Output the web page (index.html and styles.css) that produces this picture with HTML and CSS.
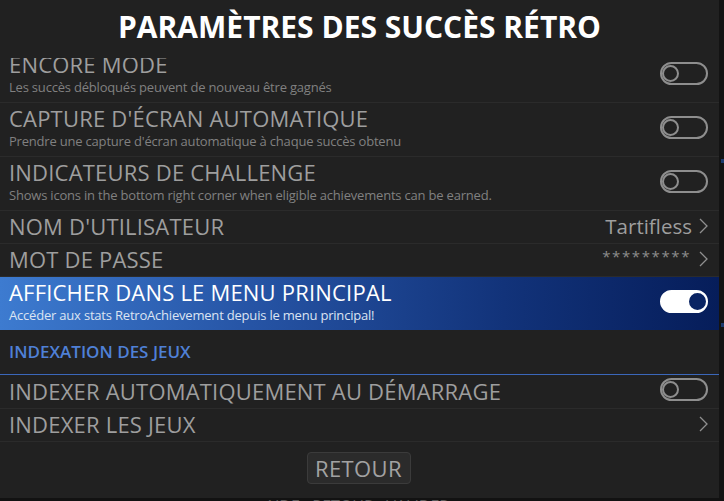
FILE: index.html
```html
<!DOCTYPE html>
<html lang="fr">
<head>
<meta charset="utf-8">
<title>Paramètres des succès rétro</title>
<link rel="stylesheet" href="styles.css">
</head>
<body>
<div class="screen">
  <div class="panel">
    <h1 class="title">PARAMÈTRES DES SUCCÈS RÉTRO</h1>
    <div class="list">
      <div class="list-inner">
        <div class="row row-desc">
          <div class="row-text">
            <div class="row-title">ENCORE MODE</div>
            <div class="row-sub">Les succès débloqués peuvent de nouveau être gagnés</div>
          </div>
          <span class="toggle"><span class="knob"></span></span>
        </div>
        <div class="row row-desc">
          <div class="row-text">
            <div class="row-title">CAPTURE D'ÉCRAN AUTOMATIQUE</div>
            <div class="row-sub">Prendre une capture d'écran automatique à chaque succès obtenu</div>
          </div>
          <span class="toggle"><span class="knob"></span></span>
        </div>
        <div class="row row-desc">
          <div class="row-text">
            <div class="row-title">INDICATEURS DE CHALLENGE</div>
            <div class="row-sub">Shows icons in the bottom right corner when eligible achievements can be earned.</div>
          </div>
          <span class="toggle"><span class="knob"></span></span>
        </div>
        <div class="row row-single">
          <div class="row-text"><div class="row-title">NOM D'UTILISATEUR</div></div>
          <div class="value">
            <span class="value-text">Tartifless</span>
            <svg class="chev" width="9" height="16" viewBox="0 0 9 16"><polyline points="1,1 8,8 1,15" fill="none" stroke="#8f8f8f" stroke-width="1.3"/></svg>
          </div>
        </div>
        <div class="row row-single">
          <div class="row-text"><div class="row-title">MOT DE PASSE</div></div>
          <div class="value">
            <span class="pw">*********</span>
            <svg class="chev" width="9" height="16" viewBox="0 0 9 16"><polyline points="1,1 8,8 1,15" fill="none" stroke="#8f8f8f" stroke-width="1.3"/></svg>
          </div>
        </div>
        <div class="row row-desc active">
          <div class="row-text">
            <div class="row-title">AFFICHER DANS LE MENU PRINCIPAL</div>
            <div class="row-sub">Accéder aux stats RetroAchievement depuis le menu principal!</div>
          </div>
          <span class="toggle on"><span class="knob"></span></span>
        </div>
        <div class="group">INDEXATION DES JEUX</div>
        <div class="row row-single row-first">
          <div class="row-text"><div class="row-title">INDEXER AUTOMATIQUEMENT AU DÉMARRAGE</div></div>
          <span class="toggle"><span class="knob"></span></span>
        </div>
        <div class="row row-single">
          <div class="row-text"><div class="row-title">INDEXER LES JEUX</div></div>
          <div class="value">
            <svg class="chev" width="9" height="16" viewBox="0 0 9 16"><polyline points="1,1 8,8 1,15" fill="none" stroke="#8f8f8f" stroke-width="1.3"/></svg>
          </div>
        </div>
      </div>
    </div>
    <div class="footer">
      <button class="btn">RETOUR</button>
    </div>
  </div>
  <div class="rail">
    <span class="rail-mark mark-a"></span>
    <span class="rail-mark mark-b"></span>
  </div>
</div>
<div class="hint">AIDE &nbsp; RETOUR &nbsp; VALIDER</div>
</body>
</html>
```
FILE: styles.css
```css
html, body {
  margin: 0;
  padding: 0;
  background: #121212;
}
body {
  width: 724px;
  height: 501px;
  overflow: hidden;
  font-family: "Open Sans", "Noto Sans", sans-serif;
}
.screen {
  display: flex;
  height: 498px;
}
.panel {
  width: 719px;
  background: #212121;
  display: flex;
  flex-direction: column;
}
.title {
  margin: 0;
  padding: 9px 0 13px;
  font-size: 30px;
  line-height: 36px;
  font-weight: 700;
  color: #ffffff;
  text-align: center;
}
.list {
  height: 385px;
  overflow: hidden;
}
.list-inner {
  margin-top: -9px;
}
.row {
  display: flex;
  align-items: flex-start;
  justify-content: space-between;
  box-sizing: border-box;
  padding: 0 11px 0 9px;
  border-bottom: 1px solid #2b2b2b;
}
.row-desc { height: 54px; }
.row-single { height: 33px; }
.row-first { height: 34px; }
.row-text {
  padding-top: 3px;
}
.row-first .row-text { padding-top: 4px; }
.row-title {
  font-size: 22px;
  line-height: 24px;
  letter-spacing: 0.2px;
  color: #9e9e9e;
  white-space: nowrap;
}
.row-sub {
  margin-top: 2px;
  font-size: 13px;
  line-height: 18px;
  letter-spacing: -0.2px;
  color: #808080;
  white-space: nowrap;
}
.toggle {
  align-self: center;
  margin-bottom: 4px;
  box-sizing: border-box;
  width: 48px;
  height: 23px;
  border: 2px solid #8e8e8e;
  border-radius: 12px;
  display: flex;
  align-items: center;
}
.knob {
  box-sizing: border-box;
  width: 17px;
  height: 17px;
  border: 2px solid #8e8e8e;
  border-radius: 50%;
}
.toggle.on {
  background: #ffffff;
  border-color: #ffffff;
  justify-content: flex-end;
}
.toggle.on .knob {
  background: #0a2463;
  border-color: #0a2463;
}
.value {
  display: flex;
  align-items: center;
  height: 24px;
  padding-top: 3px;
}
.value-text {
  font-size: 20.5px;
  line-height: 24px;
  color: #9e9e9e;
  margin-right: 7px;
}
.pw {
  align-self: flex-start;
  font-size: 15px;
  line-height: 15px;
  letter-spacing: 1.6px;
  color: #8c8c8c;
  margin-top: 2px;
  margin-right: 8px;
}
.chev {
  display: block;
}
.active {
  height: 53px;
  border-bottom: none;
  background: linear-gradient(90deg, #3d7bd0 0%, #2654a5 35%, #12337a 70%, #061d5a 100%);
}
.active .row-title { color: #ffffff; }
.active .row-sub { color: #dce4f2; }
.group {
  box-sizing: border-box;
  height: 45px;
  padding: 12px 9px 0;
  font-size: 17px;
  line-height: 20px;
  font-weight: 600;
  color: #4f80d6;
  border-bottom: 1px solid #3b67ba;
}
.footer {
  display: flex;
  justify-content: center;
  padding: 9px 0 14px;
}
.btn {
  box-sizing: border-box;
  width: 104px;
  height: 32px;
  margin: 0 0 0 -2px;
  padding: 0;
  background: #2b2b2b;
  border: 1px solid #3b3b3b;
  border-radius: 4px;
  font-family: "Open Sans", "Noto Sans", sans-serif;
  font-size: 22px;
  line-height: 30px;
  letter-spacing: 0.4px;
  color: #a2a2a2;
}
.rail {
  position: relative;
  width: 5px;
  background: #131313;
}
.rail-mark {
  position: absolute;
  right: 0;
  width: 3px;
  height: 4px;
  background: #1c3a6e;
}
.mark-a { top: 159px; }
.mark-b { top: 323px; }
.hint {
  height: 3px;
  overflow: hidden;
  text-align: center;
  font-size: 16px;
  line-height: 16px;
  color: #5a5a5a;
  padding-right: 10px;
}
```
